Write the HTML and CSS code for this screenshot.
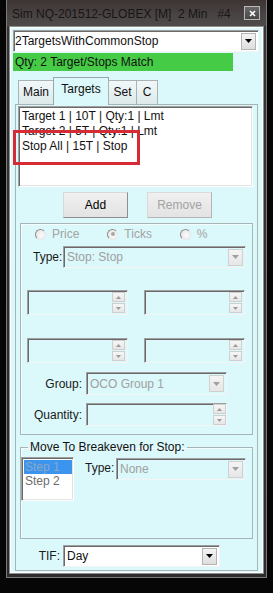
FILE: index.html
```html
<!DOCTYPE html>
<html>
<head>
<meta charset="utf-8">
<link rel="stylesheet" href="styles.css">
</head>
<body>
<div class="win">
  <div class="titlebar">
    <span class="title">Sim NQ-201512-GLOBEX [M]  2 Min   #4</span>
    <span class="close"><svg width="7" height="7" viewBox="0 0 7 7"><path d="M1 1L6 6M6 1L1 6" stroke="#fff" stroke-width="1.6"/></svg></span>
  </div>
  <div class="client">
    <div class="combo combo-main">
      <span class="combo-text">2TargetsWithCommonStop</span>
      <span class="dd"><svg width="7" height="4" viewBox="0 0 7 4"><path d="M0 0H7L3.5 4Z" fill="#000"/></svg></span>
    </div>
    <div class="status">Qty: 2 Target/Stops Match</div>
    <div class="tabs">
      <div class="tab tab-main">Main</div>
      <div class="tab tab-targets active">Targets</div>
      <div class="tab tab-set">Set</div>
      <div class="tab tab-c">C</div>
    </div>
    <div class="page">
      <div class="listbox targets-list">
        <div class="item">Target 1 | 10T | Qty:1 | Lmt</div>
        <div class="item">Target 2 | 5T | Qty:1 | Lmt</div>
        <div class="item">Stop All | 15T | Stop</div>
      </div>
      <div class="btnrow">
        <div class="btn">Add</div>
        <div class="btn disabled">Remove</div>
      </div>
      <div class="group g1">
        <div class="radios">
          <div class="radio-item"><span class="radio"></span><span class="rlabel">Price</span></div>
          <div class="radio-item"><span class="radio checked"></span><span class="rlabel">Ticks</span></div>
          <div class="radio-item"><span class="radio"></span><span class="rlabel">%</span></div>
        </div>
        <div class="row type-row">
          <span class="lbl type-lbl">Type:</span>
          <div class="combo combo-dis type-combo">
            <span class="combo-text">Stop: Stop</span>
            <span class="dd dd-dis"><svg width="7" height="4" viewBox="0 0 7 4"><path d="M0 0H7L3.5 4Z" fill="#a0a0a0"/></svg></span>
          </div>
        </div>
        <div class="row spin-row spin-row1">
          <div class="spin spin-small"><span class="spbtns"><span class="spb"><svg width="5" height="3" viewBox="0 0 5 3"><path d="M0 3H5L2.5 0Z" fill="#9a9a9a"/></svg></span><span class="spb"><svg width="5" height="3" viewBox="0 0 5 3"><path d="M0 0H5L2.5 3Z" fill="#9a9a9a"/></svg></span></span></div>
          <div class="spin spin-small"><span class="spbtns"><span class="spb"><svg width="5" height="3" viewBox="0 0 5 3"><path d="M0 3H5L2.5 0Z" fill="#9a9a9a"/></svg></span><span class="spb"><svg width="5" height="3" viewBox="0 0 5 3"><path d="M0 0H5L2.5 3Z" fill="#9a9a9a"/></svg></span></span></div>
        </div>
        <div class="row spin-row spin-row2">
          <div class="spin spin-small"><span class="spbtns"><span class="spb"><svg width="5" height="3" viewBox="0 0 5 3"><path d="M0 3H5L2.5 0Z" fill="#9a9a9a"/></svg></span><span class="spb"><svg width="5" height="3" viewBox="0 0 5 3"><path d="M0 0H5L2.5 3Z" fill="#9a9a9a"/></svg></span></span></div>
          <div class="spin spin-small"><span class="spbtns"><span class="spb"><svg width="5" height="3" viewBox="0 0 5 3"><path d="M0 3H5L2.5 0Z" fill="#9a9a9a"/></svg></span><span class="spb"><svg width="5" height="3" viewBox="0 0 5 3"><path d="M0 0H5L2.5 3Z" fill="#9a9a9a"/></svg></span></span></div>
        </div>
        <div class="row field-row group-row">
          <span class="lbl wide-lbl">Group:</span>
          <div class="combo combo-dis field-combo">
            <span class="combo-text">OCO Group 1</span>
            <span class="dd dd-dis"><svg width="7" height="4" viewBox="0 0 7 4"><path d="M0 0H7L3.5 4Z" fill="#a0a0a0"/></svg></span>
          </div>
        </div>
        <div class="row field-row qty-row">
          <span class="lbl wide-lbl">Quantity:</span>
          <div class="spin field-spin"><span class="spbtns"><span class="spb"><svg width="5" height="3" viewBox="0 0 5 3"><path d="M0 3H5L2.5 0Z" fill="#9a9a9a"/></svg></span><span class="spb"><svg width="5" height="3" viewBox="0 0 5 3"><path d="M0 0H5L2.5 3Z" fill="#9a9a9a"/></svg></span></span></div>
        </div>
      </div>
      <fieldset class="group g2">
        <legend>Move To Breakeven for Stop:</legend>
        <div class="g2-body">
          <div class="listbox steps">
            <div class="step sel">Step 1</div>
            <div class="step">Step 2</div>
          </div>
          <span class="lbl type2-lbl">Type:</span>
          <div class="combo combo-dis type2-combo">
            <span class="combo-text">None</span>
            <span class="dd dd-dis"><svg width="7" height="4" viewBox="0 0 7 4"><path d="M0 0H7L3.5 4Z" fill="#a0a0a0"/></svg></span>
          </div>
        </div>
      </fieldset>
      <div class="row tif-row">
        <span class="lbl tif-lbl">TIF:</span>
        <div class="combo tif-combo">
          <span class="combo-text">Day</span>
          <span class="dd"><svg width="7" height="4" viewBox="0 0 7 4"><path d="M0 0H7L3.5 4Z" fill="#000"/></svg></span>
        </div>
      </div>
    </div>
  </div>
  <div class="callout"></div>
</div>
</body>
</html>
```

FILE: styles.css
```css
* { box-sizing: border-box; }

body {
  margin: 0;
  width: 273px;
  height: 593px;
  overflow: hidden;
  background: #060606;
  font-family: "Liberation Sans", Arial, sans-serif;
  font-size: 12px;
  color: #111;
}

.win {
  position: relative;
  margin-left: 6px;
  width: 261px;
  height: 578px;
  border: 1px solid #7b7b7b;
  border-top: none;
  background: linear-gradient(#3b3535, #363434 40px, #2c2c2c);
  padding: 0 2px 3px;
  display: flex;
  flex-direction: column;
}

.titlebar {
  height: 26px;
  flex: none;
  display: flex;
  align-items: center;
  margin: 0 -2px;
  padding-left: 5px;
  background: linear-gradient(#3e3434, #4a4444 60%, #4e4b4b);
}

.title {
  white-space: pre;
  color: #161616;
  font-size: 12px;
  padding-top: 1px;
}

.close {
  margin-left: auto;
  margin-right: 6px;
  width: 16px;
  height: 14px;
  border: 1px solid #b9b9b9;
  background: linear-gradient(#6a6a6a, #474747);
  display: flex;
  align-items: center;
  justify-content: center;
}

.client {
  flex: 1;
  border: 1px solid #8d8d8d;
  background: #dbf8fa;
  box-shadow: inset 1px 1px 0 #fff, inset -1px -1px 0 #fff;
  padding: 3px 4px 2px 3px;
  display: flex;
  flex-direction: column;
}

/* combo boxes */
.combo {
  display: flex;
  align-items: center;
  height: 22px;
  border: 1px solid;
  border-color: #9f9f9f #f4f4f4 #f4f4f4 #9f9f9f;
  box-shadow: inset 1px 1px 0 #6a6a6a;
  background: #fff;
  padding-left: 3px;
}

.combo-text { white-space: nowrap; }

.dd {
  margin-left: auto;
  margin-right: 2px;
  width: 15px;
  height: 17px;
  border: 1px solid #b4b4b4;
  background: linear-gradient(#f4f4f4, #dedede);
  display: flex;
  align-items: center;
  justify-content: center;
}

.combo-dis { background: #dbf8fa; color: #a0a0a0; }
.dd-dis { border-color: #d0d0d0; background: linear-gradient(#f4f4f4, #e6e6e6); }

.combo-main { height: 22px; padding-left: 1px; }

.status {
  margin-top: 1px;
  width: 220px;
  height: 18px;
  line-height: 18px;
  padding-left: 2px;
  background: #46cb46;
  color: #111;
}

/* tabs */
.tabs {
  display: flex;
  align-items: flex-end;
  height: 27px;
  margin-top: 6px;
  padding-left: 5px;
  position: relative;
  z-index: 1;
}

.tab {
  height: 24px;
  border: 1px solid #a8b3b5;
  border-bottom: none;
  background: linear-gradient(#f2f8f9, #dde9ea);
  text-align: center;
  line-height: 22px;
  margin-right: -1px;
}

.tab-main { width: 36px; }
.tab-targets { width: 56px; }
.tab-set { width: 29px; }
.tab-c { width: 22px; }

.tab.active {
  height: 28px;
  line-height: 22px;
  background: #dbf8fa;
  border-color: #9aa6a8;
  margin-bottom: -1px;
}

.page {
  flex: 1;
  margin: 0 1px 0 2px;
  border: 1px solid #a8b3b5;
  display: flex;
  flex-direction: column;
}

/* listbox */
.listbox {
  background: #fff;
  border: 1px solid;
  border-color: #a0a0a0 #fff #fff #a0a0a0;
  box-shadow: inset 1px 1px 0 #696969, inset -1px -1px 0 #e3e3e3;
}

.targets-list {
  margin: 1px 0 0 2px;
  width: 235px;
  height: 81px;
  padding: 2px 0 0 3px;
}

.item {
  height: 15px;
  line-height: 15px;
  white-space: nowrap;
}

.callout {
  position: absolute;
  left: 6px;
  top: 130px;
  width: 127px;
  height: 35px;
  border: 3px solid #d62a34;
}

/* buttons */
.btnrow {
  display: flex;
  margin-top: 5px;
  padding-left: 47px;
  gap: 19px;
}

.btn {
  width: 65px;
  height: 26px;
  border: 1px solid;
  border-color: #d8d8d8 #8e8e8e #8e8e8e #d8d8d8;
  background: linear-gradient(#f0f0f0, #e3e3e3);
  display: flex;
  align-items: center;
  justify-content: center;
  color: #000;
}

.btn.disabled { color: #a3a3a3; border-color: #dadada #b5b5b5 #b5b5b5 #dadada; }

/* group boxes */
.group {
  margin: 0 0 0 4px;
  width: 233px;
  border: 1px solid #a8b4b6;
  box-shadow: inset 1px 1px 0 #f4fdfd;
}

.g1 {
  margin-top: 5px;
  height: 212px;
  display: flex;
  flex-direction: column;
}

.radios {
  display: flex;
  margin-top: 3px;
  padding-left: 14px;
  height: 14px;
  align-items: center;
}

.radio-item {
  width: 85px;
  display: flex;
  align-items: center;
  color: #a3a3a3;
}

.radio {
  width: 11px;
  height: 11px;
  border-radius: 50%;
  border: 1px solid;
  border-color: #8c8c8c #e8e8e8 #e8e8e8 #8c8c8c;
  background: radial-gradient(circle at 60% 60%, #fbfbfb, #e2e2e2);
  margin-right: 6px;
  display: flex;
  align-items: center;
  justify-content: center;
}

.radio.checked::after {
  content: "";
  width: 4px;
  height: 4px;
  border-radius: 50%;
  background: #a8a8a8;
}

.row { display: flex; align-items: center; }

.lbl { color: #1a1a1a; white-space: nowrap; }

.type-row { margin-top: 5px; padding-left: 12px; }
.type-lbl { width: 30px; }
.type-combo { width: 183px; }

.spin {
  display: flex;
  align-items: center;
  border: 1px solid;
  border-color: #9f9f9f #f4f4f4 #f4f4f4 #9f9f9f;
  box-shadow: inset 1px 1px 0 #6a6a6a;
  background: #dbf8fa;
}

.spbtns {
  margin-left: auto;
  margin-right: 2px;
  display: flex;
  flex-direction: column;
}

.spb {
  width: 13px;
  height: 10px;
  border: 1px solid #cfcfcf;
  background: linear-gradient(#f6f6f6, #e6e6e6);
  display: flex;
  align-items: center;
  justify-content: center;
}

.spb + .spb { margin-top: 1px; }

.spin-row { padding-left: 6px; gap: 16px; }
.spin-row1 { margin-top: 22px; }
.spin-row2 { margin-top: 23px; }
.spin-small { width: 101px; height: 25px; }

.field-row { }
.group-row { margin-top: 9px; }
.qty-row { margin-top: 8px; }
.wide-lbl { width: 61px; text-align: right; margin-right: 4px; }
.field-combo { width: 141px; height: 23px; }
.field-spin { width: 141px; height: 23px; }
.field-spin .spbtns { margin-right: 0; }

/* fieldset */
.g2 {
  margin-top: 5px;
  padding: 0;
  height: 99px;
  min-width: 0;
}

.g2 legend {
  margin-left: 7px;
  padding: 0 2px;
  color: #111;
  line-height: 14px;
}

.g2-body {
  display: flex;
  align-items: flex-start;
  padding-top: 3px;
}

.steps {
  width: 53px;
  height: 44px;
  padding: 2px 1px 0 2px;
}

.step {
  height: 14px;
  line-height: 14px;
  color: #6d6d6d;
  padding-left: 1px;
}

.step.sel { background: #3b95ee; color: #8aa7c8; }

.type2-lbl { margin-left: 11px; margin-top: 4px; width: 31px; }
.type2-combo { width: 130px; margin-top: 1px; }

.tif-row { margin-top: 6px; }
.tif-lbl { width: 44px; text-align: right; margin-right: 3px; }
.tif-combo { width: 157px; }
```
